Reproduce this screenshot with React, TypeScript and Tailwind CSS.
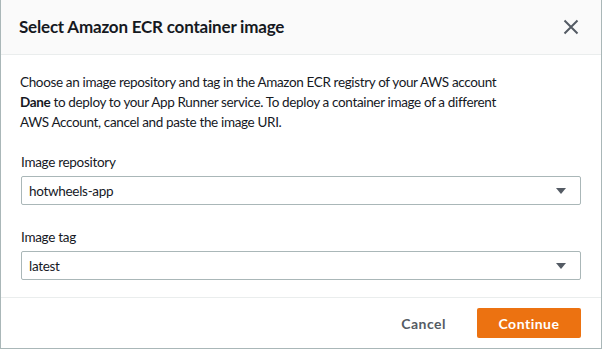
function Caret() {
  return (
    <svg width="10" height="6" viewBox="0 0 10 6" className="shrink-0">
      <path d="M0 0h10L5 6z" fill="#545b64" />
    </svg>
  )
}

function CloseIcon() {
  return (
    <svg width="16" height="16" viewBox="0 0 16 16" className="shrink-0">
      <path d="M1.5 1.5l13 13M14.5 1.5l-13 13" stroke="#545b64" strokeWidth="2" fill="none" />
    </svg>
  )
}

function SelectField({ label, value }: { label: string; value: string }) {
  return (
    <div className="flex flex-col">
      <label className="text-[13.5px] leading-[20px] tracking-[-0.3px] text-[#16191f]">{label}</label>
      <div className="mt-[4px] flex h-[29px] items-center justify-between rounded-[2px] border border-[#aab7b8] bg-white pl-[7px] pr-[14px]">
        <span className="text-[13.5px] leading-[20px] tracking-[-0.3px] text-[#16191f]">{value}</span>
        <Caret />
      </div>
    </div>
  )
}

export default function App() {
  return (
    <div
      className="flex h-[349px] w-[602px] flex-col border-x border-b border-[#aab7b8] bg-white"
      style={{ fontFamily: 'Lato, "Noto Sans", sans-serif' }}
    >
      <div className="flex h-[55px] items-center justify-between border-b border-[#eaeded] bg-[#fafafa] pl-[18px] pr-[22px]">
        <h2 className="text-[17px] font-bold tracking-[-0.2px] text-[#16191f]">Select Amazon ECR container image</h2>
        <CloseIcon />
      </div>

      <div className="flex flex-1 flex-col pl-[19px] pr-[20px] pt-[17px] pb-[16px]">
        <p className="text-[13.5px] leading-[20px] tracking-[-0.35px] text-[#16191f]">
          Choose an image repository and tag in the Amazon ECR registry of your AWS account
          <br />
          <span className="font-bold">Dane</span> to deploy to your App Runner service. To deploy a container
          image of a different
          <br />
          AWS Account, cancel and paste the image URI.
        </p>
        <div className="mt-[20px] flex flex-col gap-[22px] pl-[1px]">
          <SelectField label="Image repository" value="hotwheels-app" />
          <SelectField label="Image tag" value="latest" />
        </div>
      </div>

      <div className="flex h-[51px] items-center justify-end gap-[31px] border-t border-[#eaeded] pr-[20px]">
        <button className="text-[14px] font-bold tracking-[0.5px] text-[#545b64]">Cancel</button>
        <button className="h-[30px] w-[104px] rounded-[2px] bg-[#ec7211] text-[14px] font-bold tracking-[0.5px] text-white">
          Continue
        </button>
      </div>
    </div>
  )
}
